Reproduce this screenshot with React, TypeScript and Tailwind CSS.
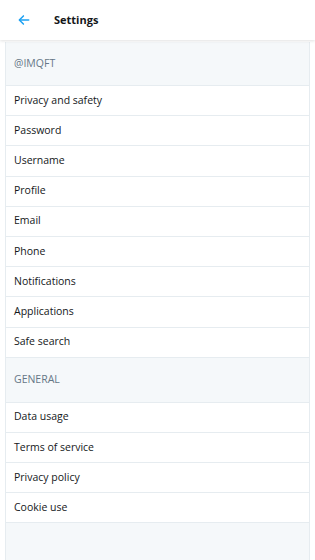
import React from 'react';

const accountItems = [
  'Privacy and safety',
  'Password',
  'Username',
  'Profile',
  'Email',
  'Phone',
  'Notifications',
  'Applications',
  'Safe search',
];

const generalItems = ['Data usage', 'Terms of service', 'Privacy policy', 'Cookie use'];

const SectionHeader = ({ label, tall }: { label: string; tall?: boolean }) => (
  <div
    className={
      (tall ? 'h-[45px] ' : 'h-[44px] ') +
      'flex items-center px-2 text-[10.5px] text-[#657786] border-b border-[#e6ecf0]'
    }
  >
    {label}
  </div>
);

const Row = ({ label }: { label: string }) => (
  <div className="h-[30.2px] flex items-center px-2 bg-white border-b border-[#e6ecf0] text-[10.5px] text-[#14171a]">
    {label}
  </div>
);

export default function App() {
  return (
    <div
      className="w-[315px] h-[560px] bg-white flex flex-col overflow-hidden"
      style={{ fontFamily: '"Open Sans", "Noto Sans", sans-serif' }}
    >
      <header className="h-[40px] shrink-0 flex items-center bg-white shadow-[0_1px_3px_rgba(0,0,0,0.12)] relative z-10">
        <div className="w-[48px] flex justify-center">
          <svg width="14" height="14" viewBox="0 0 24 24" fill="none" stroke="#1da1f2" strokeWidth="2.6" strokeLinecap="round" strokeLinejoin="round">
            <path d="M20 12H5" />
            <path d="M11 5l-7 7 7 7" />
          </svg>
        </div>
        <h1 className="ml-[6px] text-[11px] font-bold text-[#14171a]">Settings</h1>
      </header>

      <main className="flex-1 mx-[5px] mt-[2px] bg-[#f5f8fa] border-x border-[#e6ecf0] flex flex-col">
        <SectionHeader label="@IMQFT" />
        {accountItems.map((item) => (
          <Row key={item} label={item} />
        ))}
        <SectionHeader label="GENERAL" tall />
        {generalItems.map((item) => (
          <Row key={item} label={item} />
        ))}
      </main>
    </div>
  );
}
